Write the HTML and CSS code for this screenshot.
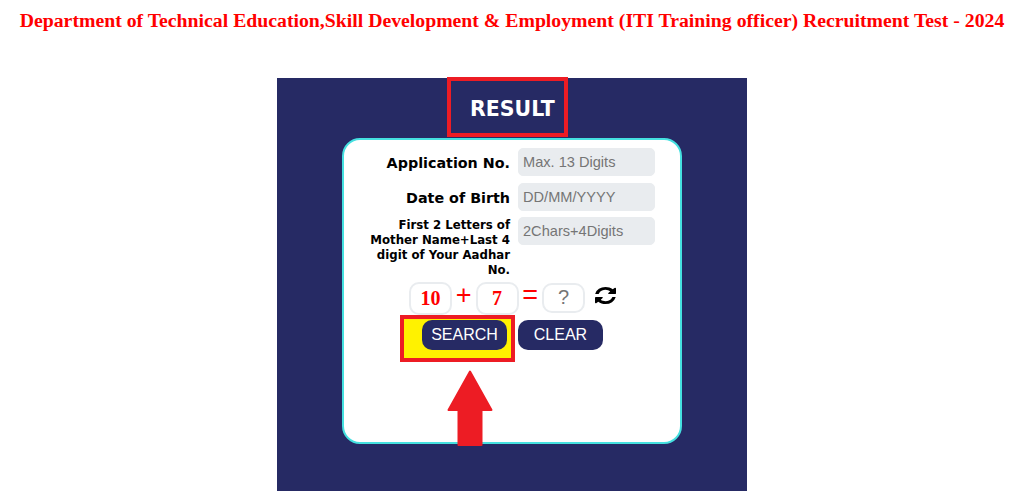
FILE: index.html
```html
<!DOCTYPE html>
<html lang="en">
<head>
    <meta charset="UTF-8">
    <meta name="viewport" content="width=device-width, initial-scale=1.0">
    <title>Result</title>
    <link rel="stylesheet" href="styles.css">
</head>
<body>

    <h1 class="page-title">Department of Technical Education,Skill Development &amp; Employment (ITI Training officer) Recruitment Test - 2024</h1>

    <div class="panel">
        <h2 class="result-title">RESULT</h2>

        <form class="card">
            <div class="fields">
                <label class="field-label">Application No.</label>
                <input class="field-input" type="text" placeholder="Max. 13 Digits">

                <label class="field-label">Date of Birth</label>
                <input class="field-input" type="text" placeholder="DD/MM/YYYY">

                <label class="field-label field-label-small">First 2 Letters of Mother Name+Last 4 digit of Your Aadhar No.</label>
                <input class="field-input" type="text" placeholder="2Chars+4Digits">
            </div>

            <div class="captcha">
                <span class="captcha-box">10</span>
                <span class="captcha-sign">+</span>
                <span class="captcha-box">7</span>
                <span class="captcha-sign">=</span>
                <input class="captcha-answer" type="text" placeholder="?">
                <svg class="refresh-icon" viewBox="128 128 1536 1536" preserveAspectRatio="none">
                    <path d="M1639 1056q0 5-1 7-64 268-268 434.500t-478 166.500q-146 0-282.500-55t-243.500-157l-129 129q-19 19-45 19t-45-19-19-45v-448q0-26 19-45t45-19h448q26 0 45 19t19 45-19 45l-137 137q71 66 161 102t187 36q134 0 250-65t186-179q11-17 53-117 8-23 30-23h192q13 0 22.500 9.500t9.500 22.500zm25-800v448q0 26-19 45t-45 19h-448q-26 0-45-19t-19-45 19-45l138-138q-148-137-349-137-134 0-250 65t-186 179q-11 17-53 117-8 23-30 23h-199q-13 0-22.500-9.500t-9.500-22.500v-7q65-268 270-434.500t480-166.500q146 0 284 55.500t245 156.500l130-129q19-19 45-19t45 19 19 45z"/>
                </svg>
            </div>

            <div class="actions">
                <div class="search-mark">
                    <button class="btn" type="button">SEARCH</button>
                </div>
                <button class="btn" type="reset">CLEAR</button>
            </div>

            <svg class="arrow" viewBox="0 0 46 76">
                <polygon points="23,1.500 44.500,40 34.500,40 34.500,75 11.500,75 11.500,40 1.500,40"/>
            </svg>
        </form>
    </div>

</body>
</html>
```

FILE: styles.css
```css
html, body {
    overflow: hidden;
}

body {
    margin: 0;
    height: 491px;
    background: #fff;
    display: flex;
    flex-direction: column;
    align-items: center;
}

.page-title {
    flex-shrink: 0;
    margin: 0;
    padding-top: 9px;
    height: 78px;
    box-sizing: border-box;
    font-family: "Liberation Serif", serif;
    font-size: 19.750px;
    line-height: 22px;
    font-weight: bold;
    color: #f00;
    white-space: nowrap;
}

.panel {
    width: 470px;
    flex: 1;
    min-height: 0;
    background: #262a64;
    display: flex;
    flex-direction: column;
}

.result-title {
    flex-shrink: 0;
    margin: -1px 0 1px 170px;
    width: 121px;
    height: 60px;
    box-sizing: border-box;
    border: 4px solid #ed1c24;
    padding-left: 19px;
    font-family: "DejaVu Sans", sans-serif;
    font-size: 20.500px;
    line-height: 56px;
    font-weight: bold;
    color: #fff;
}

.card {
    flex-shrink: 0;
    position: relative;
    width: 340px;
    height: 306px;
    box-sizing: border-box;
    margin-left: 65px;
    padding-top: 9px;
    background: #fff;
    border: 2px solid #45e0e0;
    border-radius: 18px;
}

.fields {
    display: grid;
    grid-template-columns: 166px 137px;
    column-gap: 8px;
    grid-template-rows: 29px 28px auto;
    row-gap: 6px;
}

.field-label {
    font-family: "DejaVu Sans", sans-serif;
    font-size: 14.300px;
    line-height: 28px;
    font-weight: bold;
    color: #000;
    text-align: right;
}

.field-label-small {
    padding-left: 22px;
    font-size: 11.750px;
    line-height: 15px;
}

.field-input {
    width: 137px;
    height: 28px;
    box-sizing: border-box;
    padding: 0 4px;
    border: 1px solid #e9ecef;
    border-radius: 5px;
    background: #e9ecef;
    font-family: "Liberation Sans", sans-serif;
    font-size: 14.600px;
    margin-top: -1px;
}

.field-input::placeholder,
.captcha-answer::placeholder {
    color: #757575;
    opacity: 1;
}

.captcha {
    display: flex;
    align-items: center;
    height: 33px;
    margin: 4px 0 0 65px;
}

.captcha-box {
    width: 43px;
    height: 33px;
    box-sizing: border-box;
    border: 2px solid #e9ecef;
    border-radius: 10px;
    font-family: "Liberation Serif", serif;
    font-size: 20px;
    line-height: 28px;
    font-weight: bold;
    color: #f00;
    text-align: center;
}

.captcha-sign {
    width: 23.500px;
    font-family: "Liberation Sans", sans-serif;
    font-size: 27px;
    line-height: 28px;
    color: #f00;
    text-align: center;
    margin-top: -8px;
}

.captcha-answer {
    width: 43px;
    height: 30px;
    box-sizing: border-box;
    padding: 0;
    border: 2px solid #e9ecef;
    border-radius: 10px;
    font-family: "Liberation Sans", sans-serif;
    font-size: 20px;
    text-align: center;
    margin-top: -2px;
}

.refresh-icon {
    width: 21px;
    height: 17px;
    margin: -7px 0 0 10px;
}

.actions {
    display: flex;
    gap: 3px;
    margin: 0 0 0 56px;
}

.search-mark {
    width: 115px;
    height: 47px;
    box-sizing: border-box;
    border: 4px solid #ed1c24;
    padding: 1px 0 0 18px;
    background: #fff200;
}

.btn {
    width: 85px;
    height: 30px;
    padding: 0;
    border: none;
    border-radius: 10px;
    background: #262a64;
    font-family: "Liberation Sans", sans-serif;
    font-size: 16px;
    color: #fff;
}

.actions > .btn {
    margin-top: 5px;
}

.arrow {
    position: absolute;
    left: 103px;
    top: 230px;
    width: 46px;
    height: 76px;
}

.arrow polygon {
    fill: #ed1c24;
    stroke: #ed1c24;
    stroke-width: 2;
    stroke-linejoin: round;
}
```
